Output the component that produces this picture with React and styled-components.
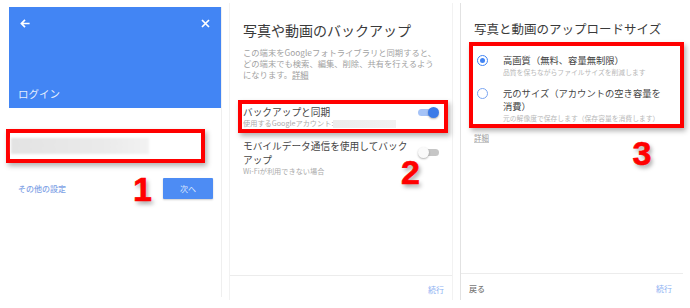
import React from 'react'
import styled, { createGlobalStyle } from 'styled-components'

const GlobalStyle = createGlobalStyle`
  body {
    margin: 0;
    background: #fff;
    font-family: "Noto Sans CJK JP", "Noto Sans", sans-serif;
  }
`

const Page = styled.div`
  display: flex;
  align-items: flex-start;
  width: 690px;
  height: 308px;
  overflow: hidden;
  background: #fff;
`

const Screen = styled.section`
  position: relative;
  display: flex;
  flex-direction: column;
  box-sizing: border-box;
  width: ${p => p.$w}px;
  height: ${p => p.$h}px;
  margin: ${p => p.$top}px 0 0 ${p => p.$left}px;
  padding: 0 ${p => p.$padR || 0}px 0 ${p => p.$padL || 0}px;
  border-left: 1px solid ${p => p.$edge || '#f2f2f2'};
  border-right: 1px solid ${p => p.$edgeR || '#f2f2f2'};
`

/* screen 1 : login */
const Header = styled.header`
  display: flex;
  flex-direction: column;
  justify-content: space-between;
  box-sizing: border-box;
  height: 101px;
  padding: 12px 11px 8px 9px;
  background: #4285f4;
`

const HeaderIcons = styled.div`
  display: flex;
  justify-content: space-between;
  align-items: center;
  padding-left: 2px;
  line-height: 0;
`

const HeaderTitle = styled.div`
  font-size: 10.5px;
  line-height: 13px;
  color: rgba(255, 255, 255, 0.88);
`

const FieldBox = styled.div`
  box-sizing: border-box;
  width: 199px;
  height: 34px;
  margin: 21px 0 0 -3px;
  padding: 5px 0 0 1px;
  border: 4px solid #f00;
  box-shadow: 2px 3px 5px rgba(0, 0, 0, 0.3);
  background: #fff;
`

const Blur = styled.div`
  width: ${p => p.$w}px;
  height: ${p => p.$h}px;
  background: linear-gradient(90deg, #e3e3e3, #ebebeb 70%, #f2f2f2);
  filter: blur(0.8px);
`

const ActionRow = styled.div`
  display: flex;
  align-items: center;
  justify-content: space-between;
  height: 21px;
  margin-top: 15px;
  padding: 0 8px 0 9px;
`

const LinkText = styled.span`
  font-size: 8px;
  color: #7fa3e6;
  font-weight: 500;
`

const NextButton = styled.button`
  width: 50px;
  height: 21px;
  padding: 0;
  border: none;
  border-radius: 1px;
  background: #4d8cf4;
  color: #dde8fd;
  font-family: inherit;
  font-size: 8px;
  box-shadow: 0 1px 2px rgba(0, 0, 0, 0.2);
`

const Marker = styled.div`
  position: absolute;
  top: ${p => p.$top}px;
  left: ${p => p.$left}px;
  font-family: "Liberation Sans", Arial, sans-serif;
  font-weight: 700;
  font-size: 34px;
  line-height: 34px;
  color: #f00;
  -webkit-text-stroke: 0.6px #f00;
  text-shadow: 2px 3px 4px rgba(0, 0, 0, 0.35);
`

/* screens 2 and 3 */
const Title = styled.h1`
  margin: ${p => p.$mt}px 0 0;
  font-size: ${p => p.$size}px;
  line-height: 18px;
  font-weight: 400;
  color: #3a3a3a;
  white-space: nowrap;
`

const Desc = styled.p`
  margin: 7.5px 0 0;
  font-size: 8.3px;
  line-height: 11px;
  color: #a2a2a2;
  white-space: nowrap;
`

const Detail = styled.span`
  color: #9a9a9a;
  text-decoration: underline;
  text-decoration-color: #c8c8c8;
  font-size: ${p => p.$size || 8.3}px;
`

const RedBox = styled.div`
  box-sizing: border-box;
  width: ${p => p.$w}px;
  height: ${p => p.$h}px;
  margin: ${p => p.$mt}px 0 0 -5px;
  padding: ${p => p.$pad};
  border: 4px solid #f00;
  box-shadow: 2px 3px 5px rgba(0, 0, 0, 0.3);
  background: #fff;
`

const SettingRow = styled.div`
  display: flex;
  align-items: flex-start;
  justify-content: space-between;
  margin-top: ${p => p.$mt || 0}px;
`

const SettingText = styled.div`
  display: flex;
  flex-direction: column;
`

const SettingTitle = styled.div`
  font-size: 9.7px;
  line-height: ${p => p.$lh || 13}px;
  color: #444;
  white-space: nowrap;
`

const SettingSub = styled.div`
  display: flex;
  align-items: center;
  font-size: 7.2px;
  line-height: 9px;
  color: #ababab;
  white-space: nowrap;
`

const AccountBlur = styled.span`
  display: inline-block;
  width: 63px;
  height: 8px;
  background: linear-gradient(90deg, #ececec, #f1f1f1);
`

const Toggle = styled.span`
  display: flex;
  align-items: center;
  justify-content: ${p => (p.$on ? 'flex-end' : 'flex-start')};
  flex-shrink: 0;
  width: 20px;
  height: 7px;
  margin-top: ${p => p.$mt}px;
  border-radius: 4px;
  background: ${p => (p.$on ? '#a5c3f7' : '#c6c6c6')};
`

const Thumb = styled.span`
  flex-shrink: 0;
  width: 11px;
  height: 11px;
  margin: 0 ${p => (p.$on ? '-1px' : '0')} 0 ${p => (p.$on ? '0' : '-1px')};
  border-radius: 50%;
  background: ${p => (p.$on ? '#3b7be8' : '#fafafa')};
  box-shadow: 0 1px 2px rgba(0, 0, 0, 0.3);
`

const Spacer = styled.div`
  flex: 1;
`

const Footer = styled.footer`
  display: flex;
  align-items: center;
  justify-content: ${p => p.$justify || 'flex-end'};
  box-sizing: border-box;
  height: ${p => p.$h}px;
  margin: 0 -${p => p.$bleedR}px 0 -13px;
  padding: 3px ${p => p.$padR}px 0 8px;
  border-top: 1px solid #ececec;
`

const FooterLink = styled.span`
  font-size: 8px;
  font-weight: ${p => (p.$muted ? 500 : 400)};
  color: ${p => (p.$muted ? '#777' : '#8db1f2')};
`

const Option = styled.div`
  display: flex;
  align-items: flex-start;
  gap: 15.5px;
  margin-top: ${p => p.$mt || 0}px;
`

const Radio = styled.span`
  display: flex;
  align-items: center;
  justify-content: center;
  flex-shrink: 0;
  box-sizing: border-box;
  width: 11px;
  height: 11px;
  margin-top: 1px;
  border-radius: 50%;
  border: 1.4px solid ${p => (p.$on ? '#4285f4' : '#7aa5f1')};
  &::after {
    content: '';
    display: ${p => (p.$on ? 'block' : 'none')};
    width: 5px;
    height: 5px;
    border-radius: 50%;
    background: #4285f4;
  }
`

const OptionTitle = styled.div`
  font-size: 9.3px;
  line-height: 13px;
  color: #444;
  white-space: nowrap;
`

const OptionSub = styled.div`
  font-size: 6.8px;
  line-height: 10px;
  color: #b8b8b8;
  white-space: nowrap;
`

const DetailLine = styled.div`
  margin-top: 1px;
  line-height: 10px;
`

const BackArrow = () => (
  <svg width="10" height="9" viewBox="0 0 10 9">
    <path d="M9.6 4.5H1.4M5 0.9L1.4 4.5L5 8.1" stroke="#fff" strokeWidth="1.7" fill="none" />
  </svg>
)

const CloseIcon = () => (
  <svg width="9" height="9" viewBox="0 0 9 9">
    <path d="M1 1L8 8M8 1L1 8" stroke="#fff" strokeWidth="1.7" fill="none" />
  </svg>
)

const App = () => {
  return (
    <Page>
      <GlobalStyle />

      <Screen $w={214} $h={290} $top={7} $left={8} $edge="transparent" $edgeR="#efefef">
        <Header>
          <HeaderIcons>
            <BackArrow />
            <CloseIcon />
          </HeaderIcons>
          <HeaderTitle>ログイン</HeaderTitle>
        </Header>
        <FieldBox>
          <Blur $w={138} $h={16} />
        </FieldBox>
        <ActionRow>
          <LinkText>その他の設定</LinkText>
          <NextButton>次へ</NextButton>
        </ActionRow>
        <Marker $top={165} $left={124}>1</Marker>
      </Screen>

      <Screen $w={224} $h={297} $top={3} $left={7} $padL={13} $padR={13}>
        <Title $mt={18} $size={14}>写真や動画のバックアップ</Title>
        <Desc>
          この端末をGoogleフォトライブラリと同期すると、<br />
          どの端末でも検索、編集、削除、共有を行えるよう<br />
          になります。<Detail>詳細</Detail>
        </Desc>
        <RedBox $w={210} $h={33} $mt={20} $pad="2.5px 6px 0 1px">
          <SettingRow>
            <SettingText>
              <SettingTitle>バックアップと同期</SettingTitle>
              <SettingSub>
                使用するGoogleアカウント: <AccountBlur />
              </SettingSub>
            </SettingText>
            <Toggle $on $mt={3}>
              <Thumb $on />
            </Toggle>
          </SettingRow>
        </RedBox>
        <SettingRow $mt={6}>
          <SettingText>
            <SettingTitle $lh={14}>
              モバイルデータ通信を使用してバック<br />アップ
            </SettingTitle>
            <SettingSub>Wi-Fiが利用できない場合</SettingSub>
          </SettingText>
          <Toggle $mt={10.5}>
            <Thumb />
          </Toggle>
        </SettingRow>
        <Spacer />
        <Footer $h={25} $bleedR={13} $padR={8}>
          <FooterLink>続行</FooterLink>
        </Footer>
        <Marker $top={152} $left={171}>2</Marker>
      </Screen>

      <Screen $w={224} $h={297} $top={3} $left={7} $padL={13} $padR={11} $edge="#e2e2e2" $edgeR="transparent">
        <Title $mt={17} $size={12.5}>写真と動画のアップロードサイズ</Title>
        <RedBox $w={215} $h={86} $mt={4} $pad="7.5px 0 0 3.5px">
          <Option>
            <Radio $on />
            <div>
              <OptionTitle>高画質（無料、容量無制限）</OptionTitle>
              <OptionSub>品質を保ちながらファイルサイズを削減します</OptionSub>
            </div>
          </Option>
          <Option $mt={10}>
            <Radio />
            <div>
              <OptionTitle>
                元のサイズ（アカウントの空き容量を<br />消費）
              </OptionTitle>
              <OptionSub>元の解像度で保存します（保存容量を消費します）</OptionSub>
            </div>
          </Option>
        </RedBox>
        <DetailLine>
          <Detail $size={7.5}>詳細</Detail>
        </DetailLine>
        <Spacer />
        <Footer $h={27} $bleedR={11} $padR={11} $justify="space-between">
          <FooterLink $muted>戻る</FooterLink>
          <FooterLink>続行</FooterLink>
        </Footer>
        <Marker $top={132.5} $left={171.5}>3</Marker>
      </Screen>
    </Page>
  )
}

export default App
